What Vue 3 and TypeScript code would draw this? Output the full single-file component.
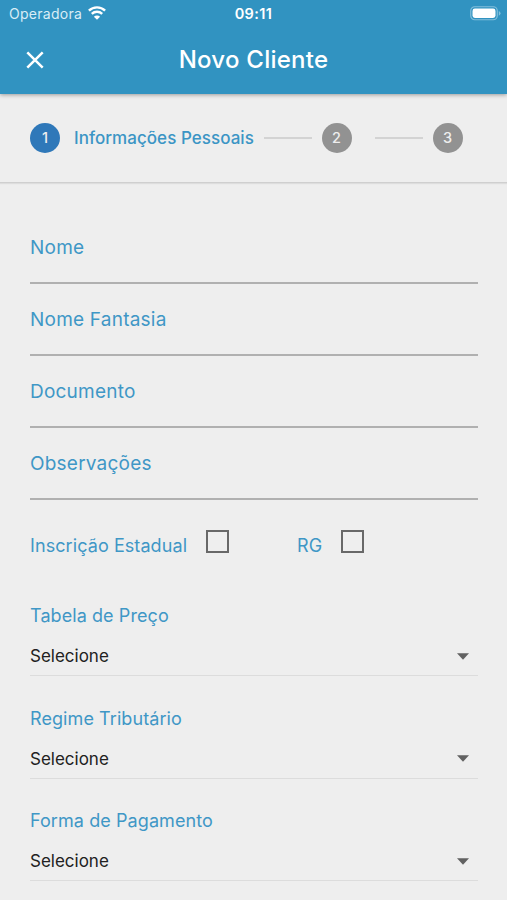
<script setup lang="ts">
import { ref } from 'vue'

interface Step { id: number; title?: string }
interface Field { id: string; label: string; value: string }

const steps: Step[] = [{ id: 1, title: 'Informações Pessoais' }, { id: 2 }, { id: 3 }]
const activeStep = ref(1)

const fields = ref<Field[]>([
  { id: 'nome', label: 'Nome', value: '' },
  { id: 'fantasia', label: 'Nome Fantasia', value: '' },
  { id: 'documento', label: 'Documento', value: '' },
  { id: 'observacoes', label: 'Observações', value: '' },
])

const hasStateRegistration = ref(false)
const hasRg = ref(false)

const selects = ref<Field[]>([
  { id: 'tabela', label: 'Tabela de Preço', value: 'Selecione' },
  { id: 'regime', label: 'Regime Tributário', value: 'Selecione' },
  { id: 'pagamento', label: 'Forma de Pagamento', value: 'Selecione' },
])
</script>

<template>
  <div class="screen">
    <header class="appbar">
      <div class="status">
        <div class="carrier">
          <span class="carrier-name">Operadora</span>
          <svg class="wifi" viewBox="0 0 18 14" width="18" height="14">
            <path d="M.9 4.7a11.6 11.6 0 0 1 16.2 0" />
            <path d="M3.8 7.9a7.5 7.5 0 0 1 10.4 0" />
            <path class="dot" d="M9 13.8 5.9 10.7a4.4 4.4 0 0 1 6.2 0z" />
          </svg>
        </div>
        <span class="clock">09:11</span>
        <div class="power">
          <svg viewBox="0 0 31 15" width="31" height="15">
            <rect class="shell" x="0.75" y="0.75" width="26.5" height="13" rx="4" />
            <rect class="charge" x="2.5" y="2.5" width="23" height="9.5" rx="2.4" />
            <path class="tip" d="M28.8 4.9q1.7.7 1.7 2.4t-1.7 2.4z" />
          </svg>
        </div>
      </div>
      <div class="toolbar">
        <button class="close" type="button" aria-label="Fechar">
          <svg viewBox="0 0 18 18" width="18" height="18"><path d="M1.3 1.3 16.7 16.7M16.7 1.3 1.3 16.7" /></svg>
        </button>
        <h1 class="title">Novo Cliente</h1>
        <span></span>
      </div>
    </header>

    <nav class="stepper">
      <template v-for="(step, index) in steps" :key="step.id">
        <span v-if="index > 0" class="connector" :class="{ late: index > 1 }"></span>
        <span class="badge" :class="{ active: step.id === activeStep }">{{ step.id }}</span>
        <span v-if="step.title" class="step-title">{{ step.title }}</span>
      </template>
    </nav>

    <main class="form">
      <div v-for="field in fields" :key="field.id" class="field">
        <span class="label large">{{ field.label }}</span>
      </div>

      <div class="checks">
        <div class="check first">
          <span class="label">Inscrição Estadual</span>
          <span class="box" role="checkbox" :aria-checked="hasStateRegistration" @click="hasStateRegistration = !hasStateRegistration"></span>
        </div>
        <div class="check">
          <span class="label">RG</span>
          <span class="box" role="checkbox" :aria-checked="hasRg" @click="hasRg = !hasRg"></span>
        </div>
      </div>

      <div v-for="item in selects" :key="item.id" class="select">
        <span class="label">{{ item.label }}</span>
        <div class="select-control">
          <span class="value">{{ item.value }}</span>
          <svg class="caret" viewBox="0 0 12 7" width="12" height="7"><path d="M0 .3h12L6 6.7z" /></svg>
        </div>
      </div>
    </main>
  </div>
</template>

<style>
body {
  margin: 0;
  background: #eeeeee;
}
</style>

<style scoped>
.screen {
  height: 900px;
  overflow: hidden;
  background: #eeeeee;
  color: #212121;
  font-family: Inter, "Liberation Sans", sans-serif;
}
.screen * {
  box-sizing: border-box;
}
.screen span,
.title {
  white-space: nowrap;
}
.appbar {
  position: relative;
  height: 94px;
  background: #3193c1;
  color: #fff;
  box-shadow: 0 1px 4px rgba(0, 0, 0, 0.35);
}
.status {
  display: grid;
  grid-template-columns: 1fr auto 1fr;
  align-items: center;
  height: 28px;
  padding: 0 7px 0 9px;
}
.carrier {
  display: flex;
  align-items: center;
  gap: 6px;
}
.carrier-name {
  font-size: 14px;
  line-height: 20px;
  letter-spacing: 0.27px;
  color: #d9edf6;
}
.wifi {
  margin-top: -2px;
  fill: none;
  stroke: #fff;
  stroke-width: 2.4;
}
.wifi .dot {
  fill: #fff;
  stroke: none;
}
.clock {
  margin-left: -2px;
  font-size: 14.5px;
  font-weight: 600;
  line-height: 20px;
  letter-spacing: 0.4px;
}
.power {
  display: flex;
  justify-content: flex-end;
  margin: -1px -1px 0 0;
}
.shell {
  fill: none;
  stroke: #83bfdb;
  stroke-width: 1.2;
}
.charge {
  fill: #fff;
}
.tip {
  fill: #83bfdb;
}
.toolbar {
  display: grid;
  grid-template-columns: 1fr auto 1fr;
  align-items: center;
  height: 64px;
  padding: 0 26px;
}
.close {
  display: flex;
  width: 18px;
  padding: 0;
  border: 0;
  background: none;
}
.close path {
  fill: none;
  stroke: #fff;
  stroke-width: 2.5;
}
.title {
  margin: 0;
  font-size: 24px;
  font-weight: 500;
  line-height: 32px;
  letter-spacing: 0.25px;
}
.stepper {
  display: flex;
  align-items: center;
  height: 88.5px;
  padding: 0 30px;
  border-bottom: 1px solid #cfcfcf;
  box-shadow: 0 1px 1px rgba(0, 0, 0, 0.07);
}
.badge {
  display: flex;
  align-items: center;
  justify-content: center;
  flex: none;
  width: 30px;
  height: 30px;
  border-radius: 50%;
  background: #929292;
  color: #eeeeee;
  font-size: 14.5px;
  font-weight: 500;
}
.badge.active {
  background: #2f78b9;
}
.step-title {
  width: 180px;
  margin-left: 14px;
  color: #3b95c5;
  font-size: 17px;
  font-weight: 500;
  letter-spacing: 0.04px;
}
.connector {
  width: 48px;
  height: 2px;
  margin: 0 9.5px 0 10px;
  background: #d3d3d3;
}
.connector.late {
  margin-left: 23.5px;
}
.form {
  padding: 29.5px 29.5px 0 30px;
}
.label {
  color: #3f97c6;
  font-size: 18px;
  line-height: 24px;
  letter-spacing: 0.08px;
}
.label.large {
  font-size: 19px;
  letter-spacing: 0.22px;
}
.field {
  display: flex;
  align-items: flex-start;
  height: 72px;
  padding-top: 24px;
  border-bottom: 2px solid #b0b0b0;
}
.checks {
  display: flex;
  height: 86px;
  padding-top: 30px;
}
.check {
  display: flex;
  align-items: flex-start;
  gap: 18.5px;
}
.check .label {
  margin-top: 4px;
}
.check.first {
  width: 267px;
}
.box {
  width: 23px;
  height: 23px;
  border: 2px solid #686868;
}
.select {
  height: 102.6px;
  padding-top: 18px;
}
.select .label {
  display: block;
}
.select-control {
  display: flex;
  align-items: center;
  justify-content: space-between;
  height: 48px;
  padding: 9px 9px 0 0;
  border-bottom: 1px solid #dcdcdc;
}
.value {
  font-size: 17px;
  line-height: 22px;
}
.caret {
  fill: #616161;
}
</style>
